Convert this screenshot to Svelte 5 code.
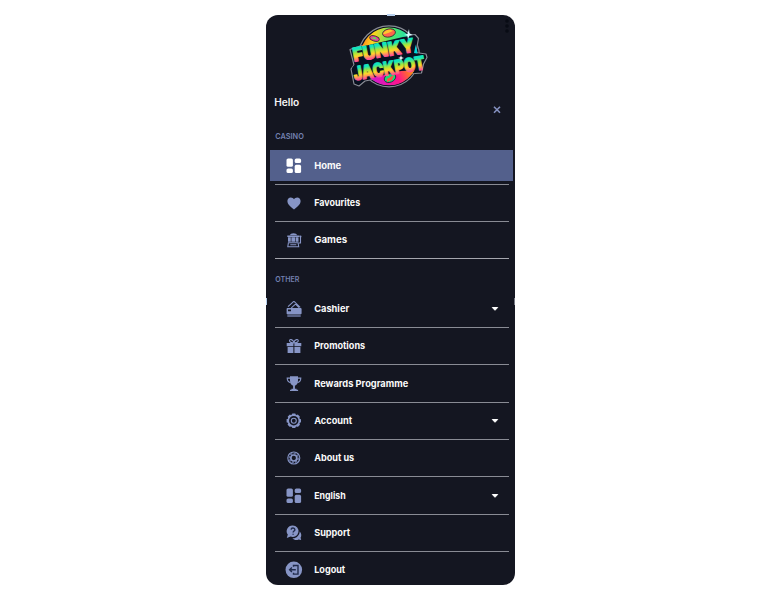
<script lang="ts">
	interface Item {
		label: string;
		icon: string;
		width: number;
		active?: boolean;
		expandable?: boolean;
	}

	interface Section {
		title: string;
		items: Item[];
	}

	const SECTIONS: Section[] = [
		{
			title: 'CASINO',
			items: [
				{ label: 'Home', icon: 'grid', width: 27, active: true },
				{ label: 'Favourites', icon: 'heart', width: 46 },
				{ label: 'Games', icon: 'slots', width: 33 },
			],
		},
		{
			title: 'OTHER',
			items: [
				{ label: 'Cashier', icon: 'cards', width: 35, expandable: true },
				{ label: 'Promotions', icon: 'gift', width: 51 },
				{ label: 'Rewards Programme', icon: 'trophy', width: 94 },
				{ label: 'Account', icon: 'gear', width: 38, expandable: true },
				{ label: 'About us', icon: 'chip', width: 40 },
				{ label: 'English', icon: 'grid', width: 31.5, expandable: true },
				{ label: 'Support', icon: 'support', width: 36 },
				{ label: 'Logout', icon: 'logout', width: 31 },
			],
		},
	];

	const TEETH = [0, 45, 90, 135, 180, 225, 270, 315];
</script>

{#snippet icon(name: string)}
	<svg class="icon" viewBox="0 0 18 18">
		{#if name === 'grid'}
			<rect x="1.5" y="1.4" width="6.4" height="8.4" rx="1.6" />
			<rect x="9.7" y="1.4" width="6.4" height="4.7" rx="1.6" />
			<rect x="1.5" y="11.4" width="6.4" height="4.7" rx="1.6" />
			<rect x="9.7" y="7.8" width="6.4" height="8.3" rx="1.6" />
		{:else if name === 'heart'}
			<path d="M9 15.6C5.7 13 2.4 10.5 2.4 7.1c0-2.2 1.5-3.7 3.4-3.7 1.4 0 2.5.7 3.2 1.9.7-1.2 1.8-1.9 3.2-1.9 1.9 0 3.4 1.5 3.4 3.7 0 3.4-3.3 5.9-6.6 8.5z" />
		{:else if name === 'slots'}
			<path d="M4.6 4.2a4.1 2.9 0 0 1 7.8 0z" />
			<path d="M2.3 4.6h12.2v1.3H2.3zM3 6.2h2.8v4.5H3zM6.4 6.2h3.6v4.5H6.4zM10.6 6.2h2.9v4.5h-2.9z" />
			<path class="line" d="M3.4 11.7h9.7l.6 4H2.8zM5.3 13.7h6M15.5 6v6h-1.6" />
			<circle cx="15.5" cy="5.5" r="1" />
		{:else if name === 'cards'}
			<path class="line" d="M3 6.6l5.2-4.8c.5-.4.9-.4 1.4 0l5.6 5.6M6.3 7.8l4.2-3.7M10.6 4.2L14 7.6" />
			<path fill-rule="evenodd" d="M2.7 8h12.7c.8 0 1.2.5 1.2 1.1v4.2c0 .7-.4 1.1-1.2 1.1H2.7c-.8 0-1.1-.4-1.1-1.1V9.1c0-.6.3-1.1 1.1-1.1zM3 9.6v1.7h3V9.6z" />
			<path d="M2.3 15.4h13.4v1.2H2.3z" />
		{:else if name === 'gift'}
			<path d="M1.7 5.9h6.7v3.4H1.7zM9.4 5.9h6.9v3.4H9.4zM2.6 9.9h5.8v6.2H2.6zM9.4 9.9h6v6.2h-6z" />
			<path class="line" d="M8.9 5.6C6.6 5.9 4.5 5.3 4.5 3.8c0-2.2 3.3-1.5 4.4 1.6.9-3.1 4.4-3.8 4.4-1.6 0 1.5-2.1 2.1-4.4 1.8z" />
		{:else if name === 'trophy'}
			<path d="M5 1.3h8v4.3c0 3-1.3 4.5-3.1 5.1v3.1h1.7v.9h1.5v1.4H5v-1.4h1.4v-.9h1.7v-3.1C6.3 10.1 5 8.6 5 5.6z" />
			<path class="line" d="M5 3.1H2.2c0 2.7 1.1 4.2 3.4 4.6M13 3.1h2.8c0 2.7-1.1 4.2-3.4 4.6" />
		{:else if name === 'gear'}
			<circle class="line thick" cx="8.8" cy="8.7" r="5.6" />
			<circle class="line" cx="8.8" cy="8.7" r="2.5" />
			{#each TEETH as angle}
				<rect x="7" y="1.5" width="3.6" height="1.9" rx=".6" transform="rotate({angle} 8.8 8.7)" />
			{/each}
		{:else if name === 'chip'}
			<circle class="line" cx="8.8" cy="9" r="6" />
			<circle class="line dash" cx="8.8" cy="9" r="4.5" />
			<circle class="line thick" cx="8.8" cy="9" r="3" />
		{:else if name === 'support'}
			<path d="M7.8 1.4a5.8 5.8 0 1 1-2.2 11.2L1.8 14l1-3.4A5.8 5.8 0 0 1 7.8 1.4z" />
			<path class="cut" d="M6.1 5.6c.1-2.2 3.8-2.1 3.8.1 0 1.4-1.8 1.3-1.8 2.8M8.1 9.7v1.1" />
			<path d="M7.4 14.2c3.8.3 7.1-2.8 7.3-6.8 1.9 2 2 4.5.9 6.3l.6 2.4-2.6-.6c-2.4 1.2-4.8.4-6.2-1.3z" />
		{:else if name === 'logout'}
			<circle cx="8.8" cy="8.8" r="8.3" />
			<path class="cut" d="M8.5 5.8V4.5h4.5v8.6H8.5v-1.3M10.8 8.8H4.8M6.9 6.5L4.6 8.8l2.3 2.3" />
		{/if}
	</svg>
{/snippet}

<div class="page">
	<nav class="drawer">
		<span class="handle top"></span>
		<span class="handle left"></span>
		<span class="handle right"></span>
		<svg class="dots" viewBox="0 0 6 16">
			<circle cx="3" cy="3" r="1.8" />
			<circle cx="3" cy="8" r="1.8" />
			<circle cx="3" cy="13" r="1.8" />
		</svg>

		<header class="brand">
			<svg class="logo" viewBox="0 0 100 80">
				<defs>
					<linearGradient id="disc" x1="0" y1="0" x2="1" y2=".25">
						<stop offset="0" stop-color="#ff5a18" />
						<stop offset=".25" stop-color="#ffd51c" />
						<stop offset=".55" stop-color="#4de86b" />
						<stop offset="1" stop-color="#00d7dc" />
					</linearGradient>
					<linearGradient id="base" x1="0" y1="0" x2="1" y2="-.2">
						<stop offset=".1" stop-color="#d719c4" />
						<stop offset=".5" stop-color="#ff1489" />
						<stop offset=".75" stop-color="#ff7b20" />
						<stop offset="1" stop-color="#ffe02a" />
					</linearGradient>
					<linearGradient id="letters" x1="0" y1="0" x2="0" y2="1">
						<stop offset=".25" stop-color="#12e5bd" />
						<stop offset=".42" stop-color="#a4e83c" />
						<stop offset=".57" stop-color="#ffd52a" />
						<stop offset=".78" stop-color="#ff4f95" />
					</linearGradient>
				</defs>
				<g class="outline">
					<circle cx="49" cy="42.3" r="30.5" />
					<path d="M10 35.5L20 32l44-10 11-1.500 3.500 4-2.600 14L86 40l1 3.500-3.500 6.500-2 9-6.500.5L62 60 25 67l-6 5-5-2-3-15 3-4z" />
				</g>
				<circle cx="49" cy="42.3" r="28.7" fill="url(#disc)" />
				<path d="M21 48h56.4A28.7 28.7 0 0 1 21 48z" fill="url(#base)" />
				<path d="M12 36l8-3 43-10 11-1.5 3 2.500-3 15 11 2-3 7-3 9-6-.5L61 57 24 66l-5 4-4-2-3-14 4-5z" fill="#071122" />
				<ellipse class="gem" cx="34.5" cy="24.5" rx="5" ry="2.6" fill="#e8429b" transform="rotate(15 34.5 24.5)" />
				<path d="M31 24l4-1 2 3z" fill="#59e55c" />
				<ellipse class="gem" cx="49" cy="19" rx="6.5" ry="4" fill="#ff654b" transform="rotate(-12 49 19)" />
				<path d="M43 20c2-5 8-5 10-3-4 1-5 3-10 3z" fill="#ffc52e" />
				<ellipse class="gem" cx="50" cy="64" rx="6" ry="4.2" fill="#20d577" transform="rotate(-25 50 64)" />
				<path d="M47 65l7-4-2 5-5 2z" fill="#ff543e" />
				<text class="word" x="14" y="47.8" textLength="62" lengthAdjust="spacingAndGlyphs" transform="rotate(-9.5 14 47.8)">FUNKY</text>
				<text class="word" x="14.5" y="66.5" textLength="72" lengthAdjust="spacingAndGlyphs" transform="rotate(-9 14.5 66.5)">JACKPOT</text>
				<path d="M69 15l.5 4.5 3.5 1.5-3.5.6L68 25l-.8-3.4L64 21l3.5-1z" fill="#d8faff" />
				<path d="M61 41l.7 2.2 2.3.8-2.3.7L61 47l-.7-2.3L58 44l2.3-.8z" fill="#fff" />
			</svg>
		</header>

		<div class="greeting">
			<svg class="hello" viewBox="0 0 26 14">
				<text x="0.3" y="10.8" textLength="25" lengthAdjust="spacingAndGlyphs">Hello</text>
			</svg>
			<svg class="close" viewBox="0 0 8 8">
				<path d="M1 .7l6 6M7 .7l-6 6" />
			</svg>
		</div>

		{#each SECTIONS as section}
			<section class="section">
				<h2 class="title">
					<svg class="caption" viewBox="0 0 30 12">
						<text x="0.3" y="8.5" textLength={section.title === 'CASINO' ? 28.5 : 24} lengthAdjust="spacingAndGlyphs">{section.title}</text>
					</svg>
				</h2>
				{#each section.items as item}
					<div class="row" class:active={item.active}>
						<div class="entry">
							{@render icon(item.icon)}
							<svg class="label" viewBox="0 0 110 16">
								<text x="0.2" y="11.4" textLength={item.width} lengthAdjust="spacingAndGlyphs">{item.label}</text>
							</svg>
							{#if item.expandable}
								<svg class="caret" viewBox="0 0 8 6">
									<path d="M1.3 1.5h5.4L4 4.3z" />
								</svg>
							{/if}
						</div>
					</div>
				{/each}
			</section>
		{/each}
	</nav>
</div>

<style>
	:global(body) {
		background: #fff;
	}

	.page {
		display: flex;
		justify-content: center;
		box-sizing: border-box;
		width: 780px;
		height: 600px;
		padding: 15px 0 15px 1px;
		font-family: Inter, "Open Sans", sans-serif;
	}

	.drawer {
		position: relative;
		width: 249px;
		height: 570px;
		border-radius: 12px;
		background: #141621;
	}

	svg {
		display: block;
		flex: none;
		overflow: visible;
	}

	.handle {
		position: absolute;
		background: #b7d0ee;
	}

	.handle.top {
		top: -1px;
		left: 121px;
		width: 8px;
		height: 2px;
	}

	.handle.left {
		top: 283px;
		left: 0;
		width: 1px;
		height: 7px;
	}

	.handle.right {
		top: 283px;
		right: 0;
		width: 1px;
		height: 7px;
		background: #777a85;
	}

	.dots {
		position: absolute;
		top: 3px;
		right: 5px;
		width: 6px;
		height: 16px;
		fill: #080b14;
	}

	.brand {
		display: flex;
		height: 75px;
		padding-left: 74px;
	}

	.logo {
		width: 100px;
		height: 80px;
		margin-top: -1px;
	}

	.outline {
		fill: #080d1b;
		stroke: #888b94;
		stroke-width: 1.2;
		stroke-linejoin: round;
	}

	.gem {
		stroke: #10202b;
		stroke-width: 0.7;
	}

	.word {
		fill: url(#letters);
		stroke: url(#letters);
		stroke-width: 1.1;
		stroke-linejoin: round;
		font-size: 19px;
		font-weight: 900;
	}

	.greeting {
		display: flex;
		justify-content: space-between;
		box-sizing: border-box;
		height: 36px;
		padding: 5px 14px 0 8px;
	}

	.hello {
		width: 26px;
		height: 14px;
		fill: #f4f4f6;
		font-size: 10px;
		font-weight: 600;
	}

	.close {
		width: 8px;
		height: 8px;
		margin-top: 11px;
		fill: none;
		stroke: #8591c1;
		stroke-width: 1.6;
	}

	.section {
		height: 133.4px;
	}

	.title {
		display: flex;
		box-sizing: border-box;
		height: 21.4px;
		margin: 0;
		padding: 4px 0 0 9px;
	}

	.section + .section {
		padding-top: 9.9px;
	}

	.caption {
		width: 30px;
		height: 12px;
		fill: #7380b0;
		font-size: 7.8px;
		font-weight: 600;
	}

	.row {
		display: flex;
		box-sizing: border-box;
		height: 37.36px;
		margin: 0 6.5px 0 9px;
		border-bottom: 1px solid #898b94;
	}

	.row:last-child {
		border-color: #a5a6ae;
	}

	.section + .section .row:last-child {
		height: 35.6px;
		border: 0;
	}

	.entry {
		display: flex;
		align-items: center;
		flex: 1;
		padding: 0 10px;
	}

	.active .entry {
		margin: 3px -4.5px 3px -5px;
		padding: 0 14px 0 15px;
		background: #53608c;
	}

	.icon {
		width: 18px;
		height: 18px;
		fill: #8795c6;
	}

	.active .icon {
		fill: #fff;
	}

	.line {
		fill: none;
		stroke: #8795c6;
		stroke-width: 1.1;
	}

	.thick {
		stroke-width: 1.7;
	}

	.dash {
		stroke: #5c6892;
		stroke-width: 1.8;
		stroke-dasharray: 2.2 1.2;
	}

	.cut {
		fill: none;
		stroke: #202b4c;
		stroke-width: 1.4;
	}

	.label {
		width: 110px;
		height: 16px;
		margin-left: 11px;
		fill: #fafafa;
		font-size: 9.4px;
		font-weight: 700;
	}

	.caret {
		width: 8px;
		height: 6px;
		margin-left: auto;
		fill: #fff;
		stroke: #fff;
		stroke-width: 1;
		stroke-linejoin: round;
	}
</style>
